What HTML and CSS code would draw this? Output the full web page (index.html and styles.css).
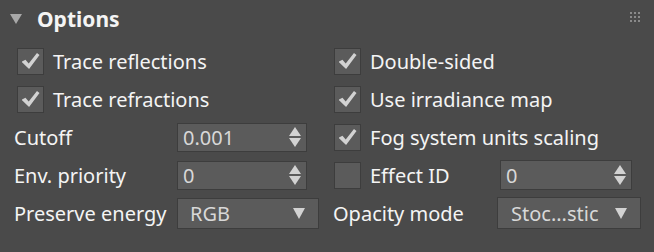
FILE: index.html
```html
<!DOCTYPE html>
<html lang="en">
<head>
    <meta charset="UTF-8">
    <title>Options</title>
    <link rel="stylesheet" href="styles.css">
</head>
<body>
    <div class="panel">
        <div class="header">
            <span class="twisty"></span>
            <h1>Options</h1>
            <span class="grip">
                <i></i><i></i><i></i><i></i><i></i><i></i><i></i><i></i><i></i>
            </span>
        </div>
        <div class="grid">
            <label class="row check-row"><span class="box on"></span>Trace reflections</label>
            <label class="row check-row right"><span class="box on"></span>Double-sided</label>

            <label class="row check-row"><span class="box on"></span>Trace refractions</label>
            <label class="row check-row right"><span class="box on"></span>Use irradiance map</label>

            <div class="row field-row">
                <span class="label">Cutoff</span>
                <div class="spinner"><span class="value">0.001</span><span class="arrows"><b class="up"></b><b class="down"></b></span></div>
            </div>
            <label class="row check-row right"><span class="box on"></span>Fog system units scaling</label>

            <div class="row field-row">
                <span class="label">Env. priority</span>
                <div class="spinner"><span class="value">0</span><span class="arrows"><b class="up"></b><b class="down"></b></span></div>
            </div>
            <div class="row field-row right">
                <label class="check-row effect"><span class="box"></span>Effect ID</label>
                <div class="spinner effect-spin"><span class="value">0</span><span class="arrows"><b class="up"></b><b class="down"></b></span></div>
            </div>

            <div class="row field-row">
                <span class="label">Preserve energy</span>
                <div class="dropdown"><span class="value">RGB</span><b class="caret"></b></div>
            </div>
            <div class="row field-row right">
                <span class="label">Opacity mode</span>
                <div class="dropdown opacity"><span class="value">Stoc...stic</span><b class="caret"></b></div>
            </div>
        </div>
    </div>
</body>
</html>
```

FILE: styles.css
```css
:root {
    --bg: #4a4a4a;
    --control: #5b5b5b;
    --edge: #3d3d3d;
    --text: #f4f4f4;
    --value: #d8d8d8;
    --glyph: #d2d2d2;
}
* { box-sizing: border-box; margin: 0; padding: 0; }
body {
    background: var(--bg);
    color: var(--text);
    font-family: 'Noto Sans', 'Open Sans', sans-serif;
    font-size: 20px;
    width: 654px; height: 252px; overflow: hidden;
}
.header {
    height: 42px; display: flex; align-items: center;
    padding: 0 14px 4px 10px;
}
.twisty {
    width: 0; height: 0; margin-right: 15px;
    border-left: 6px solid transparent; border-right: 6px solid transparent;
    border-top: 10px solid #a8a8a8;
}
h1 { font-size: 21px; font-weight: 700; flex: 1; }
.grip {
    display: grid; grid-template-columns: repeat(3, 2px); gap: 2px;
    margin-top: -4px;
}
.grip i { width: 2px; height: 2px; background: #8a8a8a; }

.grid {
    display: grid; grid-template-columns: 319px 1fr;
    grid-auto-rows: 38px; padding-left: 14px;
}
.row { display: flex; align-items: center; }
.check-row { display: flex; align-items: center; padding-left: 3px; }
.right.check-row { padding-left: 1px; }
.box {
    width: 27px; height: 27px; margin-right: 9px; flex: none;
    background: var(--control); border: 1px solid var(--edge);
    display: flex; align-items: center; justify-content: center;
}
.box.on::after {
    content: ''; width: 18px; height: 16px; background: var(--glyph);
    clip-path: polygon(0 55%, 22% 42%, 40% 66%, 86% 0, 100% 12%, 42% 100%);
}
.label { width: 163px; flex: none; }
.right .label { width: 164px; }
.spinner, .dropdown {
    height: 29px; background: var(--control); border: 1px solid var(--edge);
    display: flex; align-items: center; padding-left: 5px; color: var(--value);
}
.spinner { width: 130px; }
.dropdown { width: 142px; height: 31px; padding-left: 12px; }
.dropdown.opacity { width: 144px; height: 32px; padding-left: 13px; }
.value { flex: 1; }
.arrows { display: flex; flex-direction: column; gap: 2px; margin-right: 5px; }
.arrows b { width: 0; height: 0; border-left: 6px solid transparent; border-right: 6px solid transparent; }
.arrows .up { border-bottom: 9px solid var(--glyph); }
.arrows .down { border-top: 9px solid var(--glyph); }
.caret {
    width: 0; height: 0; margin-right: 13px;
    border-left: 6px solid transparent; border-right: 6px solid transparent;
    border-top: 11px solid var(--glyph);
}
.effect { width: 167px; padding-left: 1px; }
.effect-spin { width: 132px; height: 30px; }
```
